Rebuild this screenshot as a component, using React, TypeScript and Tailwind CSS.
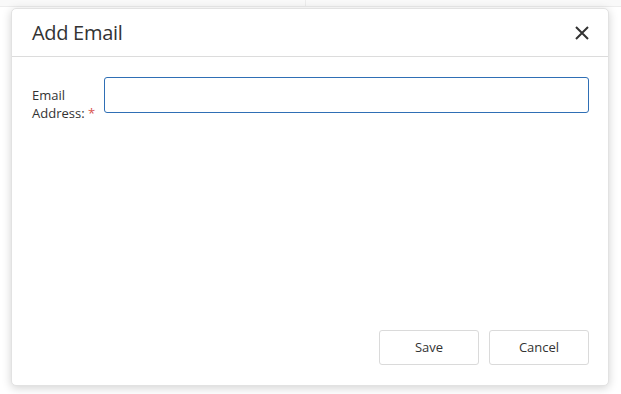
import React from "react";

export default function App() {
  return (
    <div
      className="w-[621px] h-[394px] bg-white relative overflow-hidden"
      style={{ fontFamily: '"Open Sans", "Noto Sans", sans-serif' }}
    >
      <div className="absolute left-0 top-0 w-full h-[7px] bg-[#f9f9f9] border-b border-[#ececec]" />
      <div className="absolute left-[305px] top-0 w-px h-[7px] bg-[#ececec]" />
      <div className="relative ml-[11px] pt-0 top-[8px] w-[598px] h-[378px] bg-white rounded-[5px] shadow-[0_2px_10px_rgba(0,0,0,0.18)] border border-[#e2e2e2] flex flex-col">
        <div className="h-[48px] border-b border-[#dcdcdc] flex items-center justify-between pl-[20px] pr-[19px]">
          <span className="text-[20px] text-[#333] tracking-[-0.3px]">Add Email</span>
          <svg width="14" height="14" viewBox="0 0 14 14">
            <path d="M1 1 L13 13 M13 1 L1 13" stroke="#333" strokeWidth="2" strokeLinecap="butt" />
          </svg>
        </div>
        <div className="flex-1 flex pl-[20px] pr-[19px] pt-[20px]">
          <div className="w-[72px] pt-[9px] text-[13px] leading-[18px] text-[#333]">
            Email
            <br />
            Address: <span className="text-[#d9534f]">*</span>
          </div>
          <input className="flex-1 h-[36px] border border-[#2f6fb5] rounded-[3px] outline-none px-2 text-[13px]" />
        </div>
        <div className="flex justify-end gap-[10px] pr-[19px] pb-[20px]">
          <button className="w-[100px] h-[35px] border border-[#dadada] rounded-[3px] bg-white text-[13px] text-[#333]">
            Save
          </button>
          <button className="w-[100px] h-[35px] border border-[#dadada] rounded-[3px] bg-white text-[13px] text-[#333]">
            Cancel
          </button>
        </div>
      </div>
    </div>
  );
}
